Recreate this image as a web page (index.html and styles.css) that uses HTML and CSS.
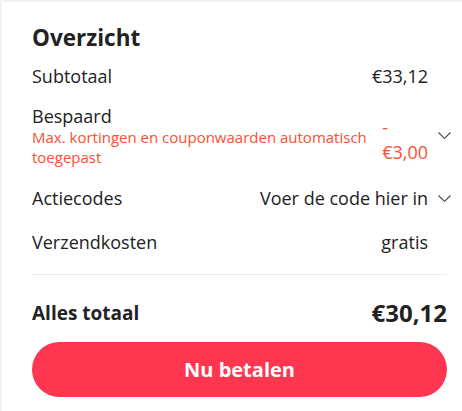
FILE: index.html
```html
<!DOCTYPE html>
<html lang="nl">
<head>
    <meta charset="UTF-8">
    <title>Overzicht</title>
    <link rel="stylesheet" href="styles.css">
</head>
<body>
    <div class="card">
        <h2 class="title">Overzicht</h2>

        <div class="row">
            <span class="label">Subtotaal</span>
            <span class="value">€33,12</span>
            <span class="icon"></span>
        </div>

        <div class="row row-saving">
            <div class="label">
                <div>Bespaard</div>
                <div class="note">Max. kortingen en couponwaarden automatisch toegepast</div>
            </div>
            <div class="value red saving">- €3,00</div>
            <span class="icon">
                <svg width="13" height="7" viewBox="0 0 13 7"><polyline points="0.5,0.5 6.5,6.3 12.5,0.5" fill="none" stroke="#444" stroke-width="1.1"/></svg>
            </span>
        </div>

        <div class="row">
            <span class="label">Actiecodes</span>
            <span class="value">Voer de code hier in</span>
            <span class="icon">
                <svg width="13" height="7" viewBox="0 0 13 7"><polyline points="0.5,0.5 6.5,6.3 12.5,0.5" fill="none" stroke="#444" stroke-width="1.1"/></svg>
            </span>
        </div>

        <div class="row">
            <span class="label">Verzendkosten</span>
            <span class="value">gratis</span>
            <span class="icon"></span>
        </div>

        <div class="divider"></div>

        <div class="total-row">
            <span class="total-label">Alles totaal</span>
            <span class="total-value">€30,12</span>
        </div>

        <button class="pay">Nu betalen</button>
    </div>
</body>
</html>
```

FILE: styles.css
```css
body {
    margin: 0;
    background: #f2f2f2;
    font-family: "Open Sans", Arial, sans-serif;
    color: #222;
}

.card {
    margin: 2px 0 0 2px;
    background: #fff;
    padding: 20px 15px 13px 30px;
    min-height: 376px;
}

.title {
    margin: 0;
    font-size: 22.5px;
    line-height: 32px;
    font-weight: 700;
}

.row {
    display: flex;
    align-items: center;
    padding: 10px 0;
    margin-right: -5px;
    font-size: 18px;
    line-height: 24px;
}

.row-saving {
    padding: 6px 0 9px;
}

.label {
    flex: 1;
    min-width: 0;
}

.note {
    font-size: 15px;
    line-height: 19.5px;
    color: #fd4e30;
    padding-right: 10px;
}

.value {
    flex-shrink: 0;
    text-align: right;
}

.red {
    color: #fd4e30;
}

.saving {
    width: min-content;
    text-align: left;
    line-height: 25px;
    padding-top: 8px;
}

.icon {
    width: 24px;
    flex-shrink: 0;
    display: flex;
    justify-content: flex-end;
    padding-right: 1px;
    box-sizing: border-box;
}

.divider {
    height: 1px;
    background: #ebebeb;
    margin-top: 10px;
}

.total-row {
    display: flex;
    justify-content: space-between;
    align-items: center;
    padding: 22px 0 13px;
}

.total-label {
    font-size: 19px;
    font-weight: 700;
    line-height: 32px;
}

.total-value {
    font-size: 24px;
    font-weight: 700;
    line-height: 32px;
}

.pay {
    display: block;
    width: 100%;
    height: 55px;
    border: none;
    border-radius: 28px;
    background: #fe3650;
    color: #fff;
    font-family: "Open Sans", Arial, sans-serif;
    font-size: 20px;
    font-weight: 700;
    cursor: pointer;
}
```
